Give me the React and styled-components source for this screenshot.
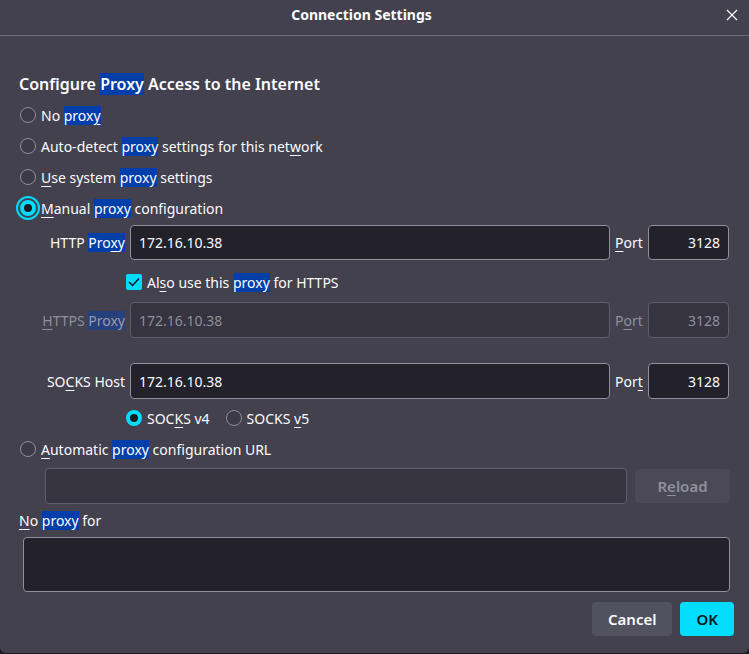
import React from 'react';
import styled, { createGlobalStyle, css } from 'styled-components';

const GlobalStyle = createGlobalStyle`
  html, body {
    margin: 0;
    background: #1c1b22;
  }
  body {
    font-family: "Noto Sans", "Open Sans", sans-serif;
    font-size: 14px;
    color: #fbfbfe;
  }
`;

const Dialog = styled.div`
  width: 749px;
  height: 653px;
  background: #42414d;
  display: flex;
  flex-direction: column;
  box-sizing: border-box;
  overflow: hidden;
  border-radius: 0 0 6px 6px;
`;

const TitleBar = styled.div`
  height: 36px;
  flex-shrink: 0;
  box-sizing: border-box;
  border-bottom: 1px solid #6e6d78;
  display: grid;
  grid-template-columns: 1fr auto 1fr;
  align-items: center;
  padding-bottom: 6px;
`;

const Title = styled.div`
  grid-column: 2;
  font-weight: 700;
  font-size: 14px;
  margin-right: 26px;
`;

const Close = styled.button`
  justify-self: end;
  margin-right: 10px;
  width: 14px;
  height: 14px;
  padding: 0;
  border: none;
  background: none;
  display: flex;
  color: #fbfbfe;
`;

const Content = styled.div`
  padding: 37px 19px 0 19px;
  display: flex;
  flex-direction: column;
`;

const Heading = styled.div`
  font-size: 16px;
  font-weight: 600;
  height: 22px;
  line-height: 22px;
  margin-bottom: 8px;
`;

const Mark = styled.span`
  background: ${p => (p.$dim ? '#26407e' : '#003eaa')};
  color: ${p => (p.$dim ? '#9a9aa6' : '#fbfbfe')};
`;

const Key = styled.span`
  text-decoration: underline;
  text-underline-offset: 3px;
`;

const Option = styled.label`
  display: flex;
  align-items: center;
  gap: 5px;
  height: 24px;
  margin-top: ${p => p.$mt ?? 7}px;
  padding-left: ${p => p.$indent ?? 1}px;
  white-space: nowrap;
`;

const RadioDot = styled.span`
  width: 16px;
  height: 16px;
  box-sizing: border-box;
  border-radius: 50%;
  flex-shrink: 0;
  border: 1px solid #8f8f9d;
  background: #3b3a46;
  ${p => p.$checked && css`
    border: 4.5px solid #00ddff;
    background: #1c1b22;
  `}
  ${p => p.$focus && css`
    outline: 2px solid #00ddff;
    outline-offset: 2px;
  `}
`;

const CheckBox = styled.span`
  width: 16px;
  height: 16px;
  border-radius: 2px;
  background: #00ddff;
  display: flex;
  align-items: center;
  justify-content: center;
  flex-shrink: 0;
`;

const FieldGrid = styled.div`
  display: grid;
  grid-template-columns: 106px 480px 28px 81px;
  column-gap: 5px;
  align-items: center;
  margin-top: ${p => p.$mt}px;
  color: ${p => (p.$disabled ? '#8f8f9d' : '#fbfbfe')};
`;

const FieldLabel = styled.span`
  text-align: right;
  white-space: nowrap;
`;

const Input = styled.div`
  height: ${p => p.$h ?? 35}px;
  box-sizing: border-box;
  border-radius: 4px;
  border: 1px solid ${p => (p.$disabled ? '#5e5d69' : '#8f8f9d')};
  background: ${p => (p.$disabled ? '#35343f' : '#23222b')};
  color: ${p => (p.$disabled ? '#8f8f9d' : '#fbfbfe')};
  display: flex;
  align-items: center;
  justify-content: ${p => (p.$right ? 'flex-end' : 'flex-start')};
  padding: 0 8px;
  flex: ${p => (p.$grow ? 1 : 'none')};
`;

const Choices = styled.div`
  display: flex;
  gap: 16px;
  padding-left: 107px;
  margin-top: 7px;
`;

const UrlRow = styled.div`
  display: flex;
  gap: 8px;
  margin-top: 7px;
  padding-left: 26px;
  align-items: center;
`;

const Button = styled.button`
  font-family: inherit;
  font-size: 15px;
  font-weight: 600;
  height: 34px;
  border: none;
  border-radius: 4px;
  padding: 0 16px;
  color: #fbfbfe;
  background: #52515e;
  ${p => p.$primary && css`
    background: #00ddff;
    color: #15141a;
  `}
  ${p => p.$disabled && css`
    background: #4a4955;
    color: #8f8f9d;
    width: 95px;
  `}
`;

const Caption = styled.div`
  height: 24px;
  line-height: 24px;
  margin-top: 5px;
`;

const TextArea = styled.div`
  height: 55px;
  box-sizing: border-box;
  border-radius: 4px;
  border: 1px solid #8f8f9d;
  background: #23222b;
  margin: 4px 0 0 4px;
`;

const Footer = styled.div`
  display: flex;
  justify-content: flex-end;
  gap: 8px;
  margin-top: 10px;
  margin-right: -4px;
`;

const Radio = ({ checked, focus, children, ...rest }) => (
  <Option {...rest}>
    <RadioDot $checked={checked} $focus={focus} />
    <span>{children}</span>
  </Option>
);

export default function App() {
  return (
    <>
      <GlobalStyle />
      <Dialog>
        <TitleBar>
          <Title>Connection Settings</Title>
          <Close>
            <svg width="14" height="14" viewBox="0 0 14 14">
              <path d="M2 2L12 12M12 2L2 12" stroke="#fbfbfe" strokeWidth="1.2" />
            </svg>
          </Close>
        </TitleBar>
        <Content>
          <Heading>Configure <Mark>Proxy</Mark> Access to the Internet</Heading>
          <Radio $mt={0}>No <Mark>prox<Key>y</Key></Mark></Radio>
          <Radio>Auto-detect <Mark>proxy</Mark> settings for this net<Key>w</Key>ork</Radio>
          <Radio><Key>U</Key>se system <Mark>proxy</Mark> settings</Radio>
          <Radio checked focus><Key>M</Key>anual <Mark>proxy</Mark> configuration</Radio>

          <FieldGrid $mt={5}>
            <FieldLabel>HTTP <Mark>Pro<Key>x</Key>y</Mark></FieldLabel>
            <Input>172.16.10.38</Input>
            <span><Key>P</Key>ort</span>
            <Input $right>3128</Input>
          </FieldGrid>

          <Option $mt={10} $indent={107}>
            <CheckBox>
              <svg width="12" height="10" viewBox="0 0 12 10">
                <path d="M1 5L4.5 8.5L11 1.5" fill="none" stroke="#15141a" strokeWidth="1.5" />
              </svg>
            </CheckBox>
            <span>Al<Key>s</Key>o use this <Mark>proxy</Mark> for HTTPS</span>
          </Option>

          <FieldGrid $mt={8} $disabled>
            <FieldLabel><Key>H</Key>TTPS <Mark $dim>Proxy</Mark></FieldLabel>
            <Input $disabled $h={36}>172.16.10.38</Input>
            <span>P<Key>o</Key>rt</span>
            <Input $disabled $right $h={36}>3128</Input>
          </FieldGrid>

          <FieldGrid $mt={25}>
            <FieldLabel>SO<Key>C</Key>KS Host</FieldLabel>
            <Input $h={36}>172.16.10.38</Input>
            <span>Por<Key>t</Key></span>
            <Input $right $h={36}>3128</Input>
          </FieldGrid>

          <Choices>
            <Radio $mt={0} $indent={0} checked>SOC<Key>K</Key>S v4</Radio>
            <Radio $mt={0} $indent={0}>SOCKS <Key>v</Key>5</Radio>
          </Choices>

          <Radio><Key>A</Key>utomatic <Mark>proxy</Mark> configuration URL</Radio>

          <UrlRow>
            <Input $disabled $grow $h={36} />
            <Button $disabled>R<Key>e</Key>load</Button>
          </UrlRow>

          <Caption><Key>N</Key>o <Mark>proxy</Mark> for</Caption>
          <TextArea />

          <Footer>
            <Button>Cancel</Button>
            <Button $primary>OK</Button>
          </Footer>
        </Content>
      </Dialog>
    </>
  );
}
